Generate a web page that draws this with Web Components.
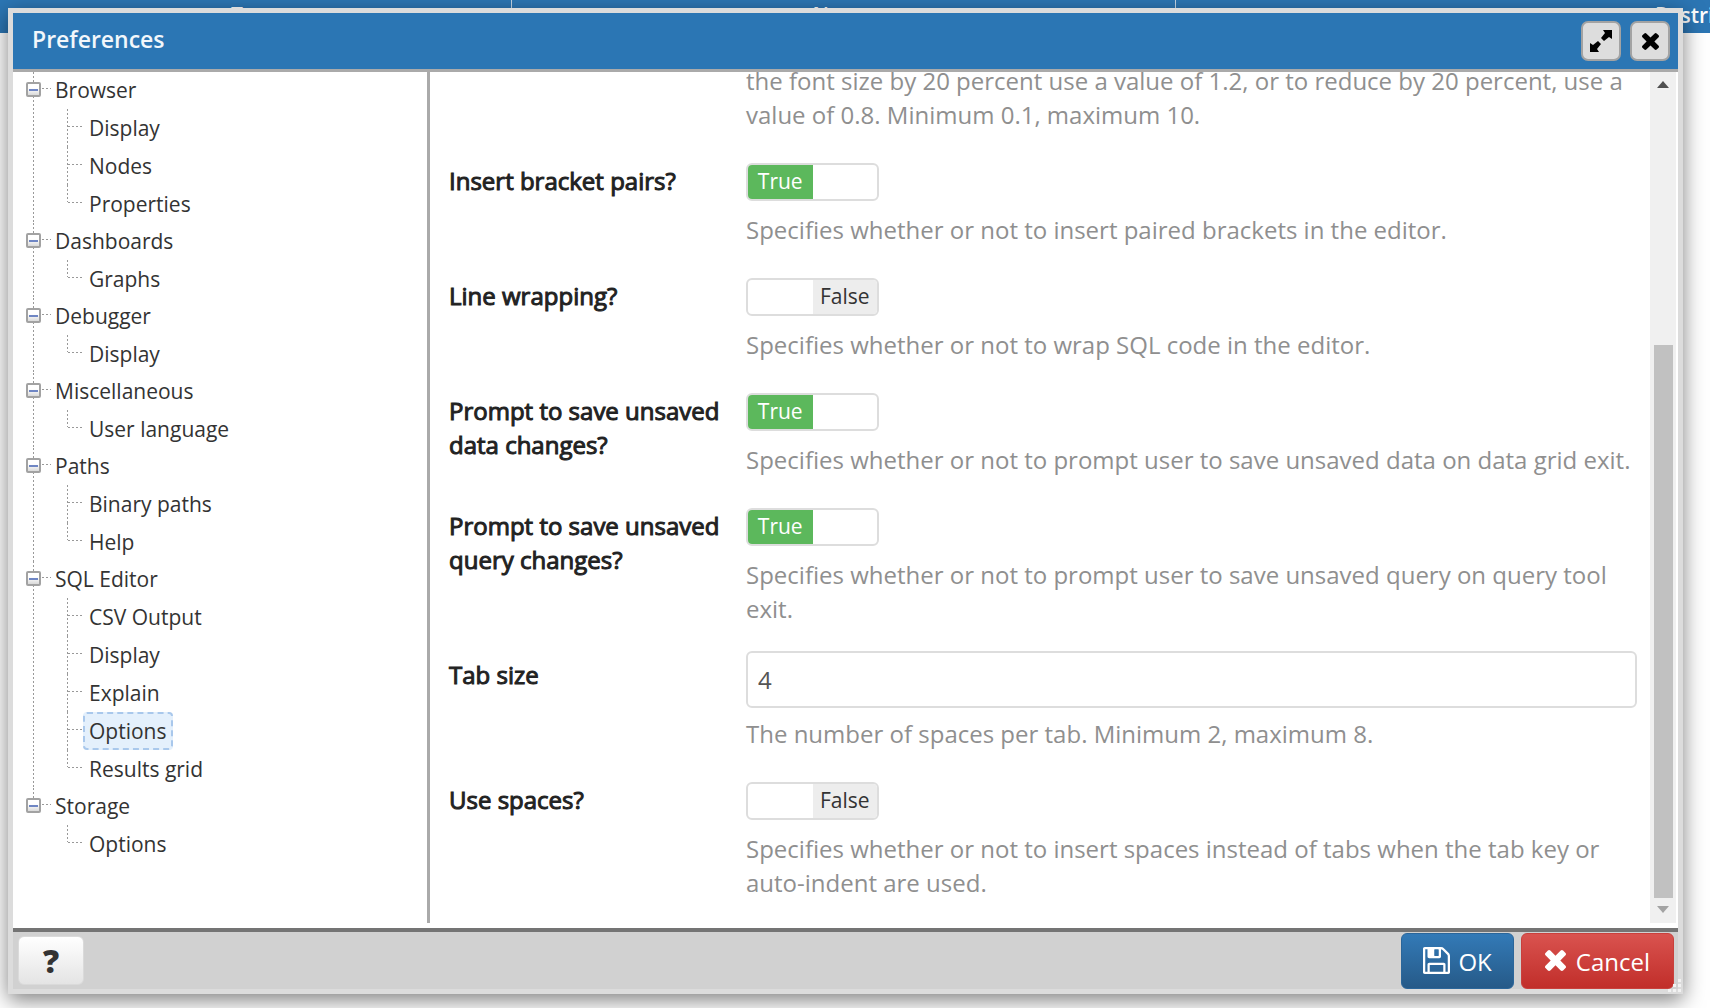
<!DOCTYPE html>
<html lang="en">
<head>
<meta charset="utf-8">
<title>Preferences</title>
<style>
  html, body {
    height: 100%;
  }

  body {
    margin: 0;
    overflow: hidden;
    background: #fff;
    color: #333;
    font-family: "Open Sans", "Liberation Sans", sans-serif;
    font-size: 21px;
  }
</style>
</head>
<body>

<grid-header></grid-header>

<pref-dialog heading="Preferences">
  <pref-tree slot="tree">
    <tree-group label="Browser">
      <tree-leaf>Display</tree-leaf>
      <tree-leaf>Nodes</tree-leaf>
      <tree-leaf>Properties</tree-leaf>
    </tree-group>
    <tree-group label="Dashboards">
      <tree-leaf>Graphs</tree-leaf>
    </tree-group>
    <tree-group label="Debugger">
      <tree-leaf>Display</tree-leaf>
    </tree-group>
    <tree-group label="Miscellaneous">
      <tree-leaf>User language</tree-leaf>
    </tree-group>
    <tree-group label="Paths">
      <tree-leaf>Binary paths</tree-leaf>
      <tree-leaf>Help</tree-leaf>
    </tree-group>
    <tree-group label="SQL Editor">
      <tree-leaf>CSV Output</tree-leaf>
      <tree-leaf>Display</tree-leaf>
      <tree-leaf>Explain</tree-leaf>
      <tree-leaf selected>Options</tree-leaf>
      <tree-leaf>Results grid</tree-leaf>
    </tree-group>
    <tree-group label="Storage">
      <tree-leaf>Options</tree-leaf>
    </tree-group>
  </pref-tree>

  <pref-field>the font size by 20 percent use a value of 1.2, or to reduce by 20 percent, use a value of 0.8. Minimum 0.1, maximum 10.</pref-field>
  <pref-field type="switch" label="Insert bracket pairs?" checked>Specifies whether or not to insert paired brackets in the editor.</pref-field>
  <pref-field type="switch" label="Line wrapping?">Specifies whether or not to wrap SQL code in the editor.</pref-field>
  <pref-field type="switch" label="Prompt to save unsaved data changes?" checked>Specifies whether or not to prompt user to save unsaved data on data grid exit.</pref-field>
  <pref-field type="switch" label="Prompt to save unsaved query changes?" checked>Specifies whether or not to prompt user to save unsaved query on query tool exit.</pref-field>
  <pref-field type="text" label="Tab size" value="4">The number of spaces per tab. Minimum 2, maximum 8.</pref-field>
  <pref-field type="switch" label="Use spaces?">Specifies whether or not to insert spaces instead of tabs when the tab key or auto-indent are used.</pref-field>

  <dialog-button slot="help" kind="default">?</dialog-button>
  <dialog-button slot="actions" kind="primary" icon="save">OK</dialog-button>
  <dialog-button slot="actions" kind="danger" icon="close">Cancel</dialog-button>
</pref-dialog>

<script>
const ICONS = {
  expand: {
    box: '0 0 22 22',
    path: 'M13 0h9v9l-3-2-5 4-3-3 4-5zM9 22H0v-9l3 2 5-4 3 3-4 5z'
  },
  close: {
    box: '302 366 1188 1188',
    path: 'M1490 1322q0 40-28 68l-136 136q-28 28-68 28t-68-28l-294-294-294 294q-28 28-68 28t-68-28l-136-136q-28-28-28-68t28-68l294-294-294-294q-28-28-28-68t28-68l136-136q28-28 68-28t68 28l294 294 294-294q28-28 68-28t68 28l136 136q28 28 28 68t-28 68l-294 294 294 294q28 28 28 68z'
  },
  save: {
    box: '128 128 1536 1536',
    path: 'M512 1536h768v-384h-768v384zm896 0h128v-896q0-14-10-38.5t-20-34.5l-281-281q-10-10-34-20t-39-10v416q0 40-28 68t-68 28h-576q-40 0-68-28t-28-68v-416h-128v1280h128v-416q0-40 28-68t68-28h832q40 0 68 28t28 68v416zm-384-928v-320q0-13-9.5-22.5t-22.5-9.5h-192q-13 0-22.5 9.5t-9.5 22.5v320q0 13 9.5 22.5t22.5 9.5h192q13 0 22.5-9.5t9.5-22.5zm640 32v928q0 40-28 68t-68 28h-1344q-40 0-68-28t-28-68v-1344q0-40 28-68t68-28h928q40 0 88 20t76 48l280 280q28 28 48 76t20 88z'
  }
};

function icon(name, size) {
  const { box, path } = ICONS[name];
  return `<svg width="${size}" height="${size}" viewBox="${box}" fill="currentColor" aria-hidden="true"><path d="${path}"/></svg>`;
}

// Column headings of the grid that lies under the dialog
class GridHeader extends HTMLElement {
  constructor() {
    super();
    this.attachShadow({ mode: 'open' }).innerHTML = `
      <style>
        :host {
          display: block;
          overflow: hidden;
          height: 33px;
          background: #2c76b4;
          color: #fff;
        }

        table {
          width: 2245px;
          border-collapse: collapse;
          table-layout: fixed;
        }

        th {
          box-sizing: border-box;
          height: 33px;
          padding: 0 0 4px;
          border-right: 1px solid #c5d6e6;
          font-size: 21px;
          font-weight: 600;
          line-height: 28px;
        }
      </style>
      <table>
        <colgroup><col style="width: 511px"><col style="width: 664px"><col></colgroup>
        <thead>
          <tr><th>Type</th><th>Name</th><th>Restriction</th></tr>
        </thead>
      </table>
    `;
  }
}

class PrefDialog extends HTMLElement {
  constructor() {
    super();
    this.attachShadow({ mode: 'open' }).innerHTML = `
      <style>
        :host {
          position: absolute;
          inset: 8px 27px 14px 8px;
          display: flex;
          flex-direction: column;
          border: 5px solid #dcdcdc;
          background: #fff;
          box-shadow: 0 6px 20px rgba(0, 0, 0, 0.5);
        }

        header {
          display: flex;
          align-items: center;
          gap: 9px;
          height: 56px;
          padding: 0 8px 0 19px;
          border-bottom: 3px solid #aaa;
          background: #2b76b4;
        }

        h1 {
          flex: 1;
          margin: 0;
          padding-bottom: 4px;
          color: #f2f7fb;
          font-size: 23px;
          font-weight: 600;
          line-height: 32px;
        }

        header button {
          display: flex;
          align-items: center;
          justify-content: center;
          width: 40px;
          height: 40px;
          padding: 0;
          border: 2px solid #a3a3a3;
          border-radius: 7px;
          background: #ddd;
          color: #000;
        }

        main {
          flex: 1;
          display: flex;
          min-height: 0;
          padding: 0 2px 5px 0;
        }

        .tree {
          width: 414px;
          border-right: 3px solid #aaa;
          overflow: hidden;
        }

        /* the list of fields is scrolled to its end */
        .fields {
          flex: 1;
          display: flex;
          flex-direction: column;
          justify-content: flex-end;
          min-width: 0;
          overflow: hidden;
          padding: 0 13px 0 19px;
        }

        footer {
          display: flex;
          align-items: center;
          justify-content: space-between;
          height: 57px;
          padding: 0 4px 0 5px;
          border-top: 4px solid #747474;
          background: #d1d1d1;
        }

        .actions {
          display: flex;
          gap: 7px;
        }

        .grip {
          position: absolute;
          right: -4px;
          bottom: -4px;
          color: #f2f2f2;
        }
      </style>
      <header>
        <h1></h1>
        <button type="button" aria-label="Maximize">${icon('expand', 22)}</button>
        <button type="button" aria-label="Close">${icon('close', 17)}</button>
      </header>
      <main>
        <div class="tree"><slot name="tree"></slot></div>
        <div class="fields"><slot></slot></div>
        <scroll-track></scroll-track>
      </main>
      <footer>
        <slot name="help"></slot>
        <div class="actions"><slot name="actions"></slot></div>
      </footer>
      <svg class="grip" width="14" height="14" fill="currentColor" aria-hidden="true">
        <path d="M10 0h3v3h-3zM5 5h3v3h-3zM10 5h3v3h-3zM0 10h3v3h-3zM5 10h3v3h-3zM10 10h3v3h-3z"/>
      </svg>
    `;
  }

  connectedCallback() {
    this.shadowRoot.querySelector('h1').textContent = this.getAttribute('heading');
  }
}

class ScrollTrack extends HTMLElement {
  constructor() {
    super();
    this.attachShadow({ mode: 'open' }).innerHTML = `
      <style>
        :host {
          display: flex;
          flex-direction: column;
          align-items: center;
          box-sizing: border-box;
          width: 26px;
          background: #f0f0f0;
        }

        svg {
          flex: none;
        }

        .rail {
          flex: 1;
          display: flex;
          flex-direction: column;
          justify-content: flex-end;
          width: 19px;
        }

        .thumb {
          height: 69%;
          background: #c1c1c1;
        }
      </style>
      <svg width="26" height="25" fill="#505050" aria-hidden="true"><path d="M13 9l6 7H7z"/></svg>
      <div class="rail"><div class="thumb"></div></div>
      <svg width="26" height="25" fill="#a3a3a3" aria-hidden="true"><path d="M13 15l6-7H7z"/></svg>
    `;
  }
}

class PrefTree extends HTMLElement {
  constructor() {
    super();
    this.attachShadow({ mode: 'open' }).innerHTML = `
      <style>
        :host {
          display: flex;
          flex-direction: column;
        }
      </style>
      <slot></slot>
    `;
  }
}

class TreeGroup extends HTMLElement {
  constructor() {
    super();
    this.attachShadow({ mode: 'open' }).innerHTML = `
      <style>
        :host {
          display: block;
          background: repeating-linear-gradient(#999 0 2px, #fff 2px 4px) 20px 0 / 1px 100% no-repeat;
        }

        /* the trunk stops at the last group */
        :host(:last-child) {
          background-size: 1px 17px;
        }

        .row {
          display: flex;
          align-items: center;
          height: 37px;
          padding-left: 13px;
        }

        button {
          display: flex;
          padding: 0 0 2px;
          border: 0;
          background: none;
        }

        a {
          padding-left: 14px;
          background: repeating-linear-gradient(90deg, #999 0 2px, #fff 2px 4px) 1px 16px / 9px 1px no-repeat;
          color: #333;
          line-height: 37px;
          text-decoration: none;
        }
      </style>
      <div class="row">
        <button type="button" aria-label="Collapse">
          <svg width="15" height="15" aria-hidden="true">
            <defs>
              <linearGradient id="face" x2="0" y2="1">
                <stop offset="0.4" stop-color="#fff"/>
                <stop offset="1" stop-color="#d4d4d4"/>
              </linearGradient>
            </defs>
            <rect x="1" y="1" width="13" height="13" rx="1" fill="url(#face)" stroke="#a2a2a2" stroke-width="2"/>
            <path d="M3 7h9v2H3z" fill="#6f86c4"/>
          </svg>
        </button>
        <a href="#"></a>
      </div>
      <slot></slot>
    `;
  }

  connectedCallback() {
    this.shadowRoot.querySelector('a').textContent = this.getAttribute('label');
  }
}

class TreeLeaf extends HTMLElement {
  constructor() {
    super();
    this.attachShadow({ mode: 'open' }).innerHTML = `
      <style>
        :host {
          display: flex;
          height: 38px;
          padding-left: 70px;
          background:
            repeating-linear-gradient(#999 0 2px, #fff 2px 4px) 54px 0 / 1px 100% no-repeat,
            repeating-linear-gradient(90deg, #999 0 2px, #fff 2px 4px) 55px 17px / 16px 1px no-repeat;
        }

        :host(:last-child) {
          background-size: 1px 17px, 16px 1px;
        }

        a {
          box-sizing: border-box;
          height: 38px;
          padding: 0 4px;
          border: 2px dashed transparent;
          border-radius: 4px;
          color: #333;
          line-height: 34px;
          text-decoration: none;
        }

        :host([selected]) a {
          border-color: #a9c8ec;
          background: #e4f0fc;
        }
      </style>
      <a href="#"><slot></slot></a>
    `;
  }
}

class PrefField extends HTMLElement {
  constructor() {
    super();
    this.attachShadow({ mode: 'open' });
  }

  connectedCallback() {
    const type = this.getAttribute('type');
    const label = this.getAttribute('label');
    const checked = this.hasAttribute('checked');

    let control = '';
    if (type === 'switch') {
      control = `
        <div class="switch">
          <input id="control" type="checkbox" ${checked ? 'checked' : ''}>
          <span class="on">True</span>
          <span class="off">False</span>
        </div>`;
    } else if (type === 'text') {
      control = `<input id="control" type="text" value="${this.getAttribute('value')}">`;
    }

    this.shadowRoot.innerHTML = `
      <style>
        :host {
          flex: none;
          display: grid;
          grid-template-columns: 280px 1fr;
          column-gap: 17px;
          padding-bottom: 25px;
          font-size: 24px;
          line-height: 34px;
        }

        :host(:last-of-type) {
          padding-bottom: 23px;
        }

        label {
          padding-top: 7px;
          color: #222;
          -webkit-text-stroke: 1px #222;
        }

        .value {
          grid-column: 2;
        }

        .switch {
          position: relative;
          display: flex;
          box-sizing: border-box;
          width: 133px;
          height: 38px;
          margin: 6px 0 12px;
          border: 2px solid #ddd;
          border-radius: 6px;
          overflow: hidden;
          font-size: 21px;
          line-height: 33px;
          text-align: center;
        }

        /* the real box lies over the drawn switch */
        .switch input {
          position: absolute;
          inset: 0;
          width: 100%;
          height: 100%;
          margin: 0;
          opacity: 0;
        }

        .switch span {
          display: none;
          width: 50%;
        }

        .on {
          background: #5cb85c;
          color: #fff;
        }

        .off {
          margin-left: auto;
          background: #ededed;
          color: #333;
        }

        .switch input:checked ~ .on,
        .switch input:not(:checked) ~ .off {
          display: block;
        }

        input[type="text"] {
          display: block;
          box-sizing: border-box;
          width: 100%;
          height: 57px;
          margin: 0 0 9px;
          padding: 0 10px;
          border: 2px solid #ddd;
          border-radius: 6px;
          color: #555;
          font: inherit;
        }

        p {
          margin: 0;
          color: #8f8f8f;
        }
      </style>
      ${label ? `<label for="control">${label}</label>` : ''}
      <div class="value">
        ${control}
        <p><slot></slot></p>
      </div>
    `;
  }
}

class DialogButton extends HTMLElement {
  constructor() {
    super();
    this.attachShadow({ mode: 'open' });
  }

  connectedCallback() {
    const name = this.getAttribute('icon');
    const sizes = { save: 27, close: 21 };

    this.shadowRoot.innerHTML = `
      <style>
        :host {
          display: block;
        }

        button {
          display: flex;
          align-items: center;
          justify-content: center;
          gap: 8px;
          height: 56px;
          padding: 0 21px;
          border: 1px solid transparent;
          border-radius: 6px;
          color: #fff;
          font: 24px/32px "Open Sans", "Liberation Sans", sans-serif;
        }

        span {
          padding-top: 3px;
        }

        :host([kind="default"]) button {
          width: 66px;
          height: 49px;
          border-color: #dadada;
          background: linear-gradient(#fff, #e4e4e4);
          color: #333;
          font-size: 32px;
          font-weight: 800;
        }

        :host([kind="default"]) span {
          padding: 0;
        }

        :host([kind="primary"]) button {
          border-color: #2b669a;
          background: linear-gradient(#337ab7, #265a88);
        }

        :host([kind="danger"]) button {
          gap: 10px;
          padding: 0 23px;
          border-color: #c9403c;
          background: linear-gradient(#d9534f, #c12e2a);
        }
      </style>
      <button type="button">${name ? icon(name, sizes[name]) : ''}<span><slot></slot></span></button>
    `;
  }
}

customElements.define('grid-header', GridHeader);
customElements.define('scroll-track', ScrollTrack);
customElements.define('pref-dialog', PrefDialog);
customElements.define('pref-tree', PrefTree);
customElements.define('tree-group', TreeGroup);
customElements.define('tree-leaf', TreeLeaf);
customElements.define('pref-field', PrefField);
customElements.define('dialog-button', DialogButton);
</script>
</body>
</html>
